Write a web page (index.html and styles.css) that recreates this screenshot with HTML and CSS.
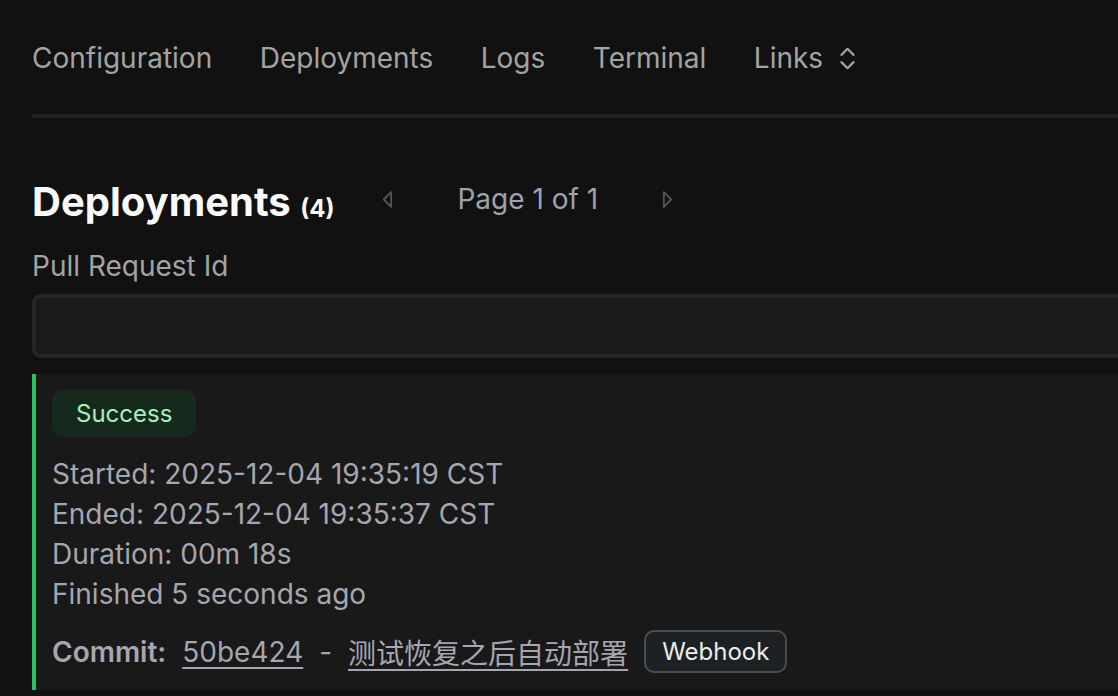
FILE: index.html
```html
<!DOCTYPE html>
<html lang="en">
<head>
<meta charset="utf-8">
<title>Deployments</title>
<link rel="stylesheet" href="styles.css">
</head>
<body>
<div class="page">
  <nav class="tabs">
    <a class="tab">Configuration</a>
    <a class="tab">Deployments</a>
    <a class="tab">Logs</a>
    <a class="tab">Terminal</a>
    <a class="tab tab-links">Links
      <svg class="updown" viewBox="0 0 24 24" fill="none" stroke="currentColor" stroke-width="2" stroke-linecap="round" stroke-linejoin="round"><path d="m7 15 5 5 5-5"/><path d="m7 9 5-5 5 5"/></svg>
    </a>
  </nav>
  <div class="sep"></div>

  <div class="head">
    <h1 class="title">Deployments <span class="count">(4)</span></h1>
    <div class="pager">
      <button class="pbtn pbtn-prev" aria-label="Previous page">
        <svg viewBox="0 0 12 20" fill="none" stroke="currentColor" stroke-width="2" stroke-linejoin="round"><path d="M10 2 L2 10 L10 18 Z"/></svg>
      </button>
      <span class="ptext">Page 1 of 1</span>
      <button class="pbtn pbtn-next" aria-label="Next page">
        <svg viewBox="0 0 12 20" fill="none" stroke="currentColor" stroke-width="2" stroke-linejoin="round"><path d="M2 2 L10 10 L2 18 Z"/></svg>
      </button>
    </div>
  </div>

  <label class="label">Pull Request Id</label>
  <div class="input"></div>

  <div class="card">
    <span class="status">Success</span>
    <div class="meta">
      <div>Started: 2025-12-04 19:35:19 CST</div>
      <div>Ended: 2025-12-04 19:35:37 CST</div>
      <div>Duration: 00m 18s</div>
      <div>Finished 5 seconds ago</div>
    </div>
    <div class="commit">
      <span class="commit-label">Commit:</span>
      <a class="commit-link">50be424</a>
      <span class="dash">-</span>
      <a class="commit-link">测试恢复之后自动部署</a>
      <span class="source">Webhook</span>
    </div>
  </div>
</div>
</body>
</html>
```

FILE: styles.css
```css
html, body {
  margin: 0;
  padding: 0;
  background: #111111;
  overflow: hidden;
}
body {
  font-family: Inter, "Noto Sans CJK SC", sans-serif;
  color: #a3a3a3;
}
.page {
  padding-left: 32px;
  margin-right: -300px;
}
.tabs {
  display: flex;
  align-items: center;
  gap: 47.5px;
  padding-top: 41px;
  font-size: 28px;
  line-height: 34px;
  color: #a3a3a3;
}
.tab {
  display: flex;
  align-items: center;
  gap: 10px;
}
.updown {
  width: 29px;
  height: 29px;
  color: #a3a3a3;
  stroke-width: 1.8;
}
.sep {
  height: 4px;
  background: #232323;
  margin-top: 39px;
}
.head {
  display: flex;
  align-items: flex-start;
  margin-top: 60px;
  height: 44px;
}
.title {
  margin: 2px 0 0;
  font-size: 40px;
  line-height: 44px;
  font-weight: 700;
  color: #fafafa;
}
.count {
  font-size: 24px;
  line-height: 1;
  font-weight: 700;
  vertical-align: -1px;
}
.pager {
  display: flex;
  align-items: center;
  margin-left: 48px;
  margin-top: 4px;
}
.pbtn {
  background: none;
  border: 0;
  padding: 0;
  width: 11px;
  height: 19px;
  color: #555555;
  display: flex;
}
.pbtn svg {
  width: 11px;
  height: 19px;
}
.ptext {
  font-size: 28px;
  line-height: 34px;
  color: #9ca3af;
  margin: 0 64px;
}
.label {
  display: block;
  margin-top: 28px;
  font-size: 28px;
  line-height: 32px;
  color: #a3a3a3;
}
.input {
  margin-top: 12px;
  height: 56px;
  border: 4px solid #262626;
  border-radius: 9px;
  background: #1a1a1a;
}
.card {
  margin-top: 16px;
  background: #191919;
  border-left: 4px solid #22c55e;
  padding: 16px 16px 17px;
}
.status {
  display: inline-block;
  font-size: 24px;
  line-height: 47px;
  padding: 0 24px;
  border-radius: 10px;
  background: #152a1c;
  color: #a6f0bf;
}
.meta {
  margin-top: 17px;
  font-size: 28px;
  line-height: 40px;
  color: #a6a6b0;
}
.commit {
  margin-top: 16px;
  display: flex;
  align-items: center;
  gap: 16px;
  font-size: 28px;
  color: #a6a6b0;
}
.commit-label {
  font-weight: 600;
}
.commit-link {
  text-decoration: underline;
  text-underline-offset: 5px;
  text-decoration-thickness: 2px;
}
.source {
  font-size: 24px;
  line-height: 39px;
  padding: 0 16px;
  border: 2px solid #4a4d50;
  border-radius: 10px;
  background: #1e2123;
  color: #ececec;
}
```
